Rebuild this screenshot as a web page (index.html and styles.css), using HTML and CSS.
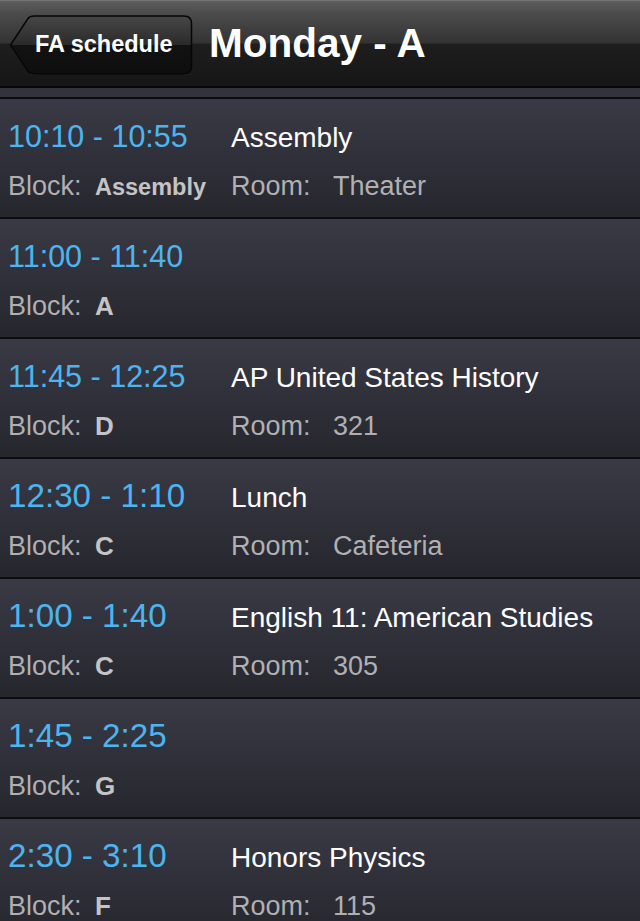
FILE: index.html
```html
<!DOCTYPE html>
<html>
<head>
<meta charset="utf-8">
<link rel="stylesheet" href="styles.css">
</head>
<body>
<div class="screen">
  <header class="navbar">
    <div class="back">
      <svg class="back-shape" width="184" height="60" viewBox="0 0 184 60">
        <defs>
          <linearGradient id="bg" x1="0" y1="0" x2="0" y2="1">
            <stop offset="0" stop-color="#474747"/>
            <stop offset="0.5" stop-color="#2a2a2a"/>
            <stop offset="0.5" stop-color="#121212"/>
            <stop offset="1" stop-color="#0e0e0e"/>
          </linearGradient>
        </defs>
        <path d="M1.5 30.5 L19 4 Q21 1.5 25 1.5 L175 1.5 Q182.5 1.5 182.5 9 L182.5 52 Q182.5 59.5 175 59.5 L25 59.5 Q21 59.5 19 57 Z" fill="#4a4a4a" opacity="0.6" transform="translate(0 0.8)"/>
        <path d="M1.5 30 L19 3.5 Q21 1 25 1 L175 1 Q182.5 1 182.5 8.5 L182.5 51.5 Q182.5 59 175 59 L25 59 Q21 59 19 56.5 Z" fill="url(#bg)" stroke="#060606" stroke-width="1.5"/>
      </svg>
      <span class="back-label">FA schedule</span>
    </div>
    <h1 class="title">Monday - A</h1>
  </header>
  <div class="list">
    <div class="spacer"></div>
    <div class="row">
      <div class="line1"><span class="time">10:10 - 10:55</span><span class="name">Assembly</span></div>
      <div class="line2"><span class="block"><span class="lbl">Block:</span><b class="fit">Assembly</b></span><span class="room"><span class="rlbl">Room:</span><span class="rval">Theater</span></span></div>
    </div>
    <div class="row">
      <div class="line1"><span class="time">11:00 - 11:40</span><span class="name"></span></div>
      <div class="line2"><span class="block"><span class="lbl">Block:</span><b>A</b></span></div>
    </div>
    <div class="row">
      <div class="line1"><span class="time">11:45 - 12:25</span><span class="name">AP United States History</span></div>
      <div class="line2"><span class="block"><span class="lbl">Block:</span><b>D</b></span><span class="room"><span class="rlbl">Room:</span><span class="rval">321</span></span></div>
    </div>
    <div class="row">
      <div class="line1"><span class="time full">12:30 - 1:10</span><span class="name">Lunch</span></div>
      <div class="line2"><span class="block"><span class="lbl">Block:</span><b>C</b></span><span class="room"><span class="rlbl">Room:</span><span class="rval">Cafeteria</span></span></div>
    </div>
    <div class="row">
      <div class="line1"><span class="time full">1:00 - 1:40</span><span class="name">English 11: American Studies</span></div>
      <div class="line2"><span class="block"><span class="lbl">Block:</span><b>C</b></span><span class="room"><span class="rlbl">Room:</span><span class="rval">305</span></span></div>
    </div>
    <div class="row">
      <div class="line1"><span class="time full">1:45 - 2:25</span><span class="name"></span></div>
      <div class="line2"><span class="block"><span class="lbl">Block:</span><b>G</b></span></div>
    </div>
    <div class="row">
      <div class="line1"><span class="time full">2:30 - 3:10</span><span class="name">Honors Physics</span></div>
      <div class="line2"><span class="block"><span class="lbl">Block:</span><b>F</b></span><span class="room"><span class="rlbl">Room:</span><span class="rval">115</span></span></div>
    </div>
  </div>
</div>
</body>
</html>
```
FILE: styles.css
```css
html, body {
  margin: 0;
  padding: 0;
  background: #2b2b33;
  overflow: hidden;
}
.screen {
  width: 640px;
  height: 921px;
  overflow: hidden;
  font-family: "Liberation Sans", Arial, sans-serif;
}
.navbar {
  box-sizing: border-box;
  height: 88px;
  border-top: 1px solid #767676;
  border-bottom: 2px solid #070707;
  background: linear-gradient(#5e5e5e 0, #4c4c4c 12px, #333333 42px, #1e1e1e 43px, #161616 86px);
  display: flex;
  align-items: flex-start;
  padding: 14px 0 0 9px;
  gap: 16px;
}
.back {
  position: relative;
  width: 184px;
  height: 60px;
  flex: none;
}
.back-shape {
  position: absolute;
  left: 0;
  top: 0;
}
.back-label {
  position: relative;
  display: block;
  padding-left: 26px;
  line-height: 58px;
  font-size: 23.5px;
  font-weight: bold;
  color: #fff;
  white-space: nowrap;
}
.title {
  margin: 0;
  padding-top: 4px;
  font-size: 40.5px;
  line-height: 48px;
  font-weight: bold;
  color: #fff;
  white-space: nowrap;
}
.list {
  display: flex;
  flex-direction: column;
}
.spacer {
  height: 9px;
  flex: none;
  background: #33333d;
  border-bottom: 2px solid #0c0c0e;
}
.row {
  box-sizing: border-box;
  height: 120px;
  flex: none;
  border-bottom: 2px solid #0c0c0e;
  background: linear-gradient(#3a3a46, #26262d);
  padding: 17px 0 0 8px;
}
.line1, .line2 {
  display: flex;
  align-items: baseline;
  white-space: nowrap;
}
.line1 {
  height: 40px;
  line-height: 40px;
}
.line2 {
  margin-top: 12px;
  line-height: 36px;
  font-size: 27px;
  color: #b0b0b3;
}
.time {
  width: 223px;
  flex: none;
  font-size: 30.5px;
  color: #4cb5f0;
}
.time.full {
  font-size: 33.2px;
}
.name {
  font-size: 28px;
  color: #fff;
}
.block {
  width: 223px;
  flex: none;
  display: flex;
  align-items: baseline;
}
.lbl {
  width: 87px;
  flex: none;
}
.block b {
  font-size: 26px;
  color: #c4c4c6;
}
.block b.fit {
  font-size: 23.5px;
}
.room {
  display: flex;
  align-items: baseline;
}
.rlbl {
  width: 102px;
  flex: none;
}
```
